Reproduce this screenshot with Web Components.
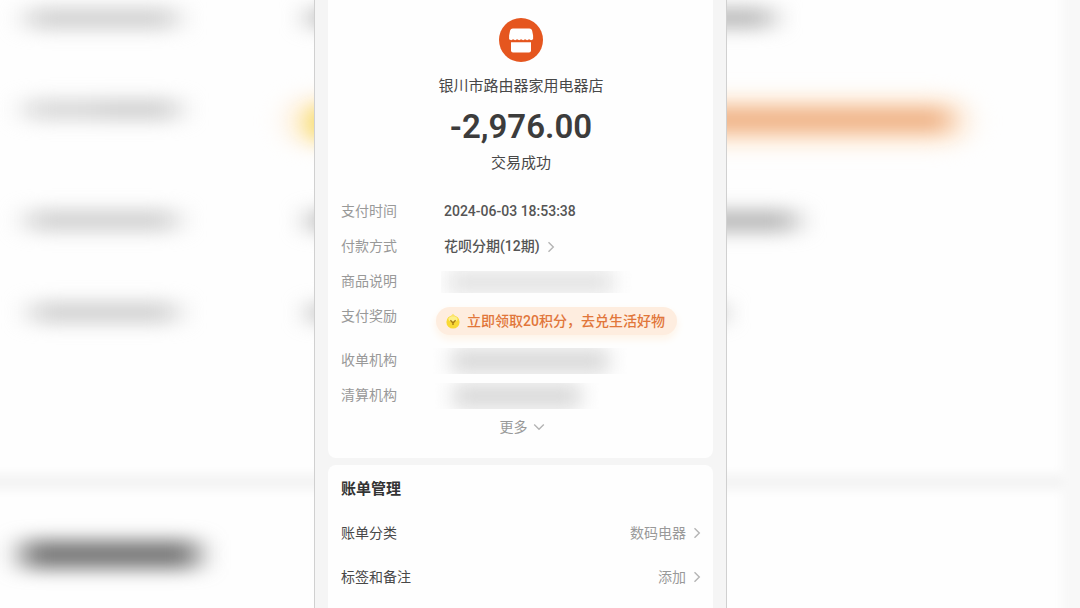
<!DOCTYPE html>
<html lang="zh-CN">
<head>
<meta charset="utf-8">
<meta name="viewport" content="width=device-width, initial-scale=1">
<title>账单详情</title>
<style>
    body {
        margin: 0;
        background: #fefefe;
        font-family: Roboto, "Noto Sans CJK SC", sans-serif;
        font-size: 14px;
        color: #484848;
    }
</style>
</head>
<body>

<bill-page>
    <bill-backdrop slot="backdrop"></bill-backdrop>
    <bill-card>
        <bill-summary>
            <span slot="shop">银川市路由器家用电器店</span>
            <span slot="amount">-2,976.00</span>
            <span slot="status">交易成功</span>
        </bill-summary>
        <bill-detail label="支付时间">2024-06-03 18:53:38</bill-detail>
        <bill-detail label="付款方式"><bill-link>花呗分期(12期)</bill-link></bill-detail>
        <bill-detail label="商品说明"><masked-value size="light"></masked-value></bill-detail>
        <bill-detail label="支付奖励" tall><reward-pill>立即领取20积分，去兑生活好物</reward-pill></bill-detail>
        <bill-detail label="收单机构"><masked-value size="long"></masked-value></bill-detail>
        <bill-detail label="清算机构"><masked-value size="short"></masked-value></bill-detail>
        <more-button>更多</more-button>
    </bill-card>
    <bill-card grow>
        <bill-heading>账单管理</bill-heading>
        <bill-setting value="数码电器">账单分类</bill-setting>
        <bill-setting value="添加">标签和备注</bill-setting>
    </bill-card>
</bill-page>

<script>
// attaches the shadow root and fills it
class BillElement extends HTMLElement {
    constructor() {
        super();
        const template = document.createElement('template');
        template.innerHTML = this.constructor.markup;
        this.attachShadow({mode: 'open'});
        this.shadowRoot.appendChild(template.content.cloneNode(true));
    }
}

const chevron = `
    <svg class="chevron" viewBox="0 0 8 12" width="8" height="12" aria-hidden="true">
        <path d="M1.5 1.2 6.3 6 1.5 10.8" fill="none" stroke="#b4b4b4" stroke-width="1.4"/>
    </svg>
`;

class BillPage extends BillElement {
    static markup = `
        <style>
            :host {
                display: grid;
                grid-template-columns: 314fr 413fr 353fr;
                min-height: 100vh;
                position: relative;
                overflow: hidden;
            }
            main {
                grid-column: 2;
                display: flex;
                flex-direction: column;
                gap: 7px;
                padding: 0 13px;
                box-sizing: border-box;
                background: #f5f5f5;
                border: solid #d0d0d0;
                border-width: 0 1px;
                z-index: 1;
            }
        </style>
        <slot name="backdrop"></slot>
        <main><slot></slot></main>
    `;
}

// enlarged, out of focus copy of the bill behind the main column
class BillBackdrop extends BillElement {
    static markup = `
        <style>
            :host {
                position: absolute;
                inset: 0;
            }
            svg {
                display: block;
                width: 100%;
                height: 100%;
            }
        </style>
        <svg viewBox="0 0 1080 608" preserveAspectRatio="xMidYMid slice" aria-hidden="true">
            <defs>
                <filter id="soft" x="-100" y="-100" width="1280" height="808" filterUnits="userSpaceOnUse" color-interpolation-filters="sRGB">
                    <feGaussianBlur stdDeviation="14 9"/>
                </filter>
                <filter id="edge" x="-100" y="-100" width="1280" height="808" filterUnits="userSpaceOnUse">
                    <feGaussianBlur stdDeviation="5"/>
                </filter>
            </defs>
            <g filter="url(#edge)" fill="#f4f4f4">
                <rect x="-40" y="474" width="1160" height="16"/>
                <rect x="1062" y="-40" width="60" height="700" fill="#f8f8f8"/>
            </g>
            <g filter="url(#soft)">
                <g fill="#d0d0d0">
                    <rect x="28" y="8" width="148" height="21"/>
                    <rect x="26" y="99" width="72" height="21" fill="#d8d8d8"/>
                    <rect x="98" y="99" width="80" height="21"/>
                    <rect x="28" y="210" width="148" height="21"/>
                    <rect x="32" y="302" width="144" height="21"/>
                </g>
                <g fill="#b8b8b8">
                    <rect x="310" y="8" width="462" height="20"/>
                    <rect x="310" y="210" width="486" height="22"/>
                    <rect x="312" y="303" width="408" height="20"/>
                </g>
                <rect x="286" y="94" width="684" height="54" rx="27" fill="#fff0e0"/>
                <circle cx="328" cy="123" r="19" fill="#f5da50"/>
                <rect x="380" y="107" width="570" height="26" fill="#f0b58a"/>
                <rect x="22" y="540" width="176" height="29" fill="#7a7a7a"/>
            </g>
        </svg>
    `;
}

class BillCard extends BillElement {
    static markup = `
        <style>
            :host {
                display: flex;
                flex-direction: column;
                padding: 18px 12px 17px 13px;
                background: #fefefe;
                border-radius: 0 0 8px 8px;
            }
            :host([grow]) {
                flex: 1;
                padding: 2px 12px 0 13px;
                border-radius: 8px 8px 0 0;
            }
        </style>
        <slot></slot>
    `;
}

class BillSummary extends BillElement {
    static markup = `
        <style>
            :host {
                display: flex;
                flex-direction: column;
                align-items: center;
                margin-bottom: 19px;
                font-size: 15px;
                line-height: 24px;
            }
            svg {
                margin-bottom: 12px;
            }
            .amount {
                margin: 9px 0 4px;
                font-size: 33px;
                font-weight: 600;
                line-height: 40px;
                color: #3c3c3c;
            }
        </style>
        <svg viewBox="0 0 44 44" width="44" height="44" aria-hidden="true">
            <circle cx="22" cy="22" r="22" fill="#e5561f"/>
            <path d="M13.6 10.5h16.8q2.2 0 2.7 2.1l1 5v3.6l-2 1-2-1-2 1-2-1-2 1-2-1-2 1-2-1-2 1-2-1-2 1-2-1v-3.6l1-5q.5-2.1 2.7-2.1z" fill="#fff"/>
            <path d="M12 24.2h20v8.3q0 2-2 2H14q-2 0-2-2z" fill="#fff"/>
        </svg>
        <slot name="shop"></slot>
        <div class="amount"><slot name="amount"></slot></div>
        <slot name="status"></slot>
    `;
}

class BillDetail extends BillElement {
    static markup = `
        <style>
            :host {
                display: grid;
                grid-template-columns: 103px 1fr;
                min-height: 35px;
                line-height: 35px;
            }
            :host([tall]) {
                min-height: 44px;
            }
            .label {
                color: #999;
            }
            .value {
                display: flex;
                align-items: center;
                white-space: nowrap;
                font-weight: 500;
                color: #555;
            }
        </style>
        <div class="label"></div>
        <div class="value"><slot></slot></div>
    `;

    connectedCallback() {
        this.shadowRoot.querySelector('.label').textContent = this.getAttribute('label');
    }
}

class BillLink extends BillElement {
    static markup = `
        <style>
            a {
                display: flex;
                align-items: center;
                gap: 7px;
                color: inherit;
                text-decoration: none;
            }
        </style>
        <a href="#"><slot></slot>${chevron}</a>
    `;
}

// value hidden behind a grey smear
class MaskedValue extends BillElement {
    static markup = `
        <style>
            :host {
                display: block;
                width: 200px;
                height: 26px;
                margin-left: -12px;
                overflow: hidden;
            }
            div {
                width: 156px;
                height: 22px;
                margin: 2px 20px;
                background: #d4d4d4;
                filter: blur(10px);
            }
            :host([size="light"]) {
                height: 22px;
                margin-left: -3px;
            }
            :host([size="light"]) div {
                width: 164px;
                margin: 0 8px;
                background: #e0e0e0;
            }
            :host([size="short"]) div {
                width: 126px;
                margin: 2px 22px;
            }
        </style>
        <div></div>
    `;
}

class RewardPill extends BillElement {
    static markup = `
        <style>
            :host {
                display: block;
                margin-left: -8px;
            }
            button {
                display: flex;
                align-items: center;
                gap: 6px;
                padding: 0 12px 0 9px;
                border: 0;
                border-radius: 14px;
                background: #feeddf;
                box-shadow: 0 4px 8px #fef3e6;
                color: #e1763a;
                font: inherit;
                line-height: 28px;
                cursor: pointer;
            }
        </style>
        <button type="button">
            <svg viewBox="0 0 16 16" width="16" height="16" aria-hidden="true">
                <circle cx="8" cy="9" r="6.6" fill="#f9d934"/>
                <path d="M4.4 4.4 8 .8l3.6 3.6z" fill="#fbe36a"/>
                <ellipse cx="8" cy="6" rx="4.6" ry="2.6" fill="#fdf08a"/>
                <path d="M5.4 7.2 8 10l2.6-2.8M8 10v2" fill="none" stroke="#a87d14" stroke-width="1.4"/>
            </svg>
            <slot></slot>
        </button>
    `;
}

class MoreButton extends BillElement {
    static markup = `
        <style>
            :host {
                display: flex;
                justify-content: center;
            }
            button {
                display: flex;
                align-items: center;
                gap: 7px;
                padding: 0;
                border: 0;
                background: none;
                color: #999;
                font: inherit;
                line-height: 28px;
                cursor: pointer;
            }
            .chevron {
                transform: rotate(90deg);
            }
        </style>
        <button type="button"><slot></slot>${chevron}</button>
    `;
}

class BillHeading extends BillElement {
    static markup = `
        <style>
            :host {
                display: block;
            }
            h2 {
                margin: 0;
                font-size: 15px;
                line-height: 44px;
                color: #333;
            }
        </style>
        <h2><slot></slot></h2>
    `;
}

class BillSetting extends BillElement {
    static markup = `
        <style>
            :host {
                display: block;
            }
            a {
                display: flex;
                align-items: center;
                gap: 7px;
                line-height: 44px;
                color: inherit;
                text-decoration: none;
            }
            .value {
                margin-left: auto;
                color: #999;
            }
        </style>
        <a href="#"><slot></slot><span class="value"></span>${chevron}</a>
    `;

    connectedCallback() {
        this.shadowRoot.querySelector('.value').textContent = this.getAttribute('value');
    }
}

window.customElements.define('bill-page', BillPage);
window.customElements.define('bill-backdrop', BillBackdrop);
window.customElements.define('bill-card', BillCard);
window.customElements.define('bill-summary', BillSummary);
window.customElements.define('bill-detail', BillDetail);
window.customElements.define('bill-link', BillLink);
window.customElements.define('masked-value', MaskedValue);
window.customElements.define('reward-pill', RewardPill);
window.customElements.define('more-button', MoreButton);
window.customElements.define('bill-heading', BillHeading);
window.customElements.define('bill-setting', BillSetting);
</script>
</body>
</html>
